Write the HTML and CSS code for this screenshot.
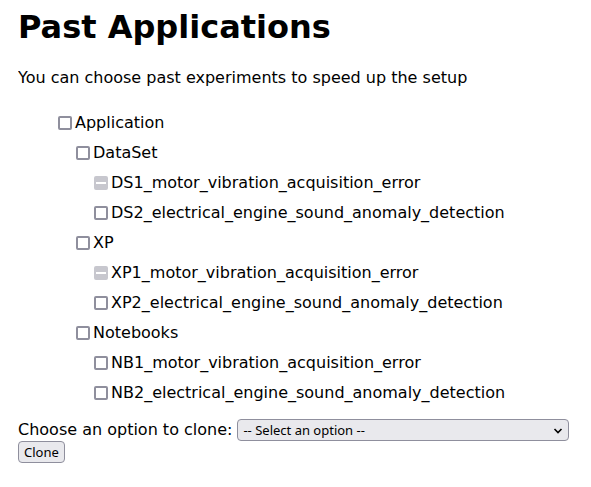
FILE: index.html
```html
<!DOCTYPE html>
<html lang="en">
<head>
<meta charset="utf-8">
<title>Past Applications</title>
<link rel="stylesheet" href="styles.css">
</head>
<body>
<main>
  <h1>Past Applications</h1>
  <p class="intro">You can choose past experiments to speed up the setup</p>
  <ul class="tree">
    <li><label><input type="checkbox">Application</label>
      <ul>
        <li><label><input type="checkbox">DataSet</label>
          <ul>
            <li><label><input type="checkbox" class="partial" disabled>DS1_motor_vibration_acquisition_error</label></li>
            <li><label><input type="checkbox">DS2_electrical_engine_sound_anomaly_detection</label></li>
          </ul>
        </li>
        <li><label><input type="checkbox">XP</label>
          <ul>
            <li><label><input type="checkbox" class="partial" disabled>XP1_motor_vibration_acquisition_error</label></li>
            <li><label><input type="checkbox">XP2_electrical_engine_sound_anomaly_detection</label></li>
          </ul>
        </li>
        <li><label><input type="checkbox">Notebooks</label>
          <ul>
            <li><label><input type="checkbox">NB1_motor_vibration_acquisition_error</label></li>
            <li><label><input type="checkbox">NB2_electrical_engine_sound_anomaly_detection</label></li>
          </ul>
        </li>
      </ul>
    </li>
  </ul>
  <form>
    <div class="clone-row">
      <label for="clone-option">Choose an option to clone:</label>
      <span class="picker">
        <select id="clone-option"><option>-- Select an option --</option></select>
        <svg class="chevron" viewBox="0 0 10 6" aria-hidden="true"><path d="M1.5 1L5 4.5 8.5 1"/></svg>
      </span>
    </div>
    <button type="button">Clone</button>
  </form>
</main>
</body>
</html>
```
FILE: styles.css
```css
body {
  margin: 8px 22px 8px 18px;
  background: #fff;
  color: #000;
  font: 16px/20px "DejaVu Sans", sans-serif;
}

h1 {
  margin: 0;
  font-size: 32px;
  line-height: 38px;
}

.intro {
  margin: 22px 0 20px;
}

ul {
  margin: 0;
  padding: 0 0 0 18px;
  list-style: none;
}

.tree {
  padding-left: 40px;
}

.tree label {
  display: flex;
  align-items: center;
  gap: 3px;
  height: 30px;
}

input {
  appearance: none;
  flex: none;
  box-sizing: border-box;
  width: 14px;
  height: 14px;
  margin: 0;
  border: 2px solid #8f8f9d;
  border-radius: 2px;
  background: #fff;
}

.partial {
  border-color: #c7c7ce;
  background: linear-gradient(#fff, #fff) center / 10px 2px no-repeat #c7c7ce;
}

form {
  margin-top: 11px;
}

.clone-row {
  display: flex;
  align-items: center;
  gap: 5px;
}

.picker {
  position: relative;
  flex: 1;
}

select,
button {
  box-sizing: border-box;
  height: 22px;
  border: 1px solid #8f8f9d;
  border-radius: 4px;
  background: #e9e9ed;
  color: #000;
  font: 13px "Noto Sans", sans-serif;
}

select {
  display: block;
  appearance: none;
  width: 100%;
  padding: 0 24px 0 5px;
}

.chevron {
  position: absolute;
  top: 9px;
  right: 6px;
  width: 10px;
  height: 6px;
  fill: none;
  stroke: #000;
  stroke-width: 1.6;
  pointer-events: none;
}

button {
  display: block;
  padding: 0 5px;
}
```
